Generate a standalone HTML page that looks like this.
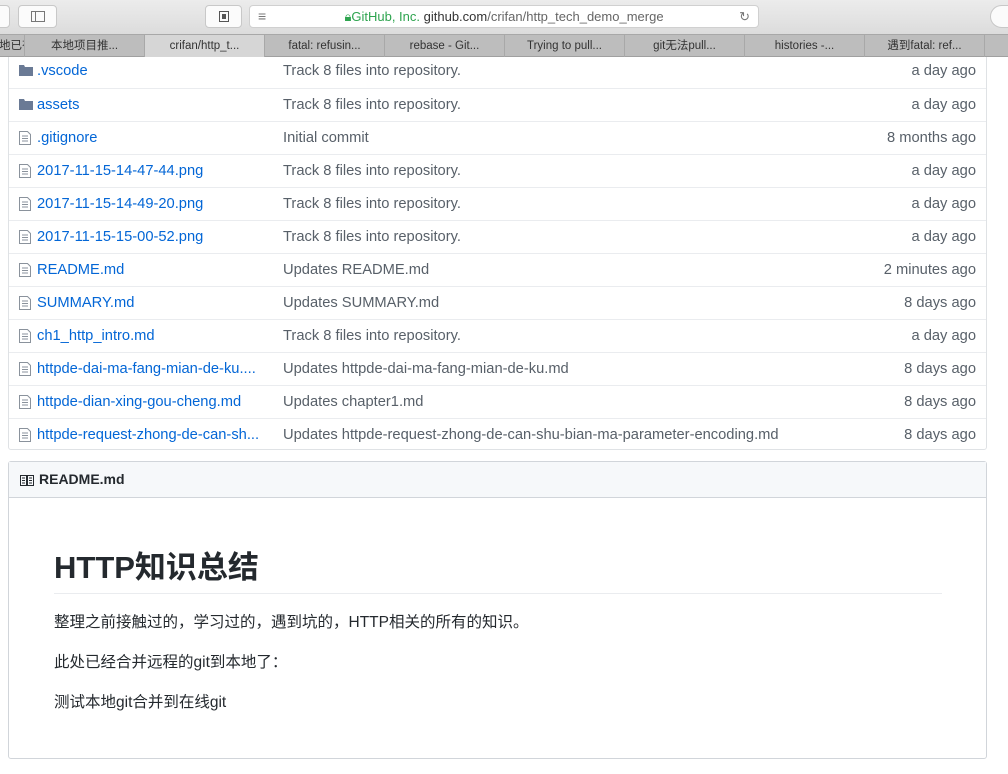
<!DOCTYPE html>
<html><head><meta charset="utf-8"><style>
*{box-sizing:border-box;margin:0;padding:0}
body{width:1008px;height:774px;overflow:hidden;background:#fff;font-family:"Liberation Sans","Noto Sans CJK SC",sans-serif;position:relative}
.toolbar{position:absolute;left:0;top:0;width:1008px;height:34px;background:linear-gradient(#ececec,#dcdcdc);z-index:3}
.btn{position:absolute;top:5px;height:23px;background:#fbfbfb;border:1px solid #c8c8c8;border-radius:4px}
.url{position:absolute;left:249px;top:5px;width:510px;height:23px;background:#fff;border:1px solid #d0d0d0;border-radius:4px;font-size:13px;line-height:21px;text-align:center;color:#333}
.tabs{position:absolute;left:0;top:34px;width:1008px;height:23px;background:#bdbdbd;border-top:1px solid #a8a8a8;border-bottom:1px solid #a0a0a0;z-index:3}
.tab{position:absolute;top:0;height:22px;font-size:11.5px;line-height:22px;text-align:center;color:#333;border-left:1px solid #a8a8a8;overflow:hidden;white-space:nowrap}
.tbl{position:absolute;left:8px;top:46px;width:979px;height:404px;border:1px solid #dfe2e5;border-radius:3px}
.row{position:absolute;left:0;width:977px;height:33px;border-top:1px solid #eaecef;font-size:14.7px}
.row .n{position:absolute;left:28px;top:8px;color:#0366d6}
.row .m{position:absolute;left:274px;top:8px;color:#586069}
.row .a{position:absolute;right:10px;top:8px;color:#586069}
.ic{position:absolute;left:10px;top:9px}
.rd{position:absolute;left:8px;top:461px;width:979px;height:298px;border:1px solid #d1d5da;border-radius:3px}
.rh{height:36px;background:#f6f8fa;border-bottom:1px solid #d1d5da;font-size:14px;font-weight:bold;line-height:35px;padding-left:30px;color:#24292e;position:relative}
h1{position:absolute;left:45px;top:80px;font-size:31px;font-weight:bold;color:#24292e}
.hr{position:absolute;left:45px;top:131px;width:888px;height:1px;background:#eaecef}
.p{position:absolute;left:45px;font-size:15.5px;color:#24292e}
</style></head><body>
<div class="toolbar">
<div class="btn" style="left:-5px;width:15px"></div>
<div class="btn" style="left:18px;width:39px"><div style="position:absolute;left:12px;top:5px;width:14px;height:11px;border:1px solid #777"></div><div style="position:absolute;left:16px;top:5px;width:1px;height:11px;background:#777"></div></div>
<div class="btn" style="left:205px;width:37px"><div style="position:absolute;left:13px;top:5px;width:10px;height:11px;border:1px solid #555"></div><div style="position:absolute;left:16px;top:8px;width:4px;height:5px;background:#555"></div></div>
<div class="url"><span style="position:absolute;left:8px;top:0;color:#777;font-size:14px">≡</span><span style="color:#2ea44f">🔒︎GitHub, Inc.</span> github.com<span style="color:#666">/crifan/http_tech_demo_merge</span><span style="position:absolute;right:8px;color:#777">↻</span></div>
<div class="btn" style="left:990px;width:30px;border-radius:12px"></div>
</div>
<div class="tabs">
<div class="tab" style="left:-2px;width:26px">地已有</div>
<div class="tab" style="left:24px;width:120px">本地项目推...</div>
<div class="tab" style="left:144px;width:120px;background:#d6d6d6">crifan/http_t...</div>
<div class="tab" style="left:264px;width:120px">fatal: refusin...</div>
<div class="tab" style="left:384px;width:120px">rebase - Git...</div>
<div class="tab" style="left:504px;width:120px">Trying to pull...</div>
<div class="tab" style="left:624px;width:120px">git无法pull...</div>
<div class="tab" style="left:744px;width:120px">histories -...</div>
<div class="tab" style="left:864px;width:120px">遇到fatal: ref...</div>
<div class="tab" style="left:984px;width:30px"></div>
</div>
<div class="tbl">
<div class="row" style="top:8px;border-top:none"><svg class="ic" width="14" height="12"><path d="M0 1h5l1 2h8v9H0z" fill="#6a7a95"/></svg><span class="n">.vscode</span><span class="m">Track 8 files into repository.</span><span class="a">a day ago</span></div>
<div class="row" style="top:41px"><svg class="ic" width="14" height="12"><path d="M0 1h5l1 2h8v9H0z" fill="#6a7a95"/></svg><span class="n">assets</span><span class="m">Track 8 files into repository.</span><span class="a">a day ago</span></div>
<div class="row" style="top:74px"><svg class="ic" width="12" height="14"><path d="M.5.5h8l3 3v10H.5z M3 5h6M3 7.5h6M3 10h6" fill="none" stroke="#8a929c"/></svg><span class="n">.gitignore</span><span class="m">Initial commit</span><span class="a">8 months ago</span></div>
<div class="row" style="top:107px"><svg class="ic" width="12" height="14"><path d="M.5.5h8l3 3v10H.5z M3 5h6M3 7.5h6M3 10h6" fill="none" stroke="#8a929c"/></svg><span class="n">2017-11-15-14-47-44.png</span><span class="m">Track 8 files into repository.</span><span class="a">a day ago</span></div>
<div class="row" style="top:140px"><svg class="ic" width="12" height="14"><path d="M.5.5h8l3 3v10H.5z M3 5h6M3 7.5h6M3 10h6" fill="none" stroke="#8a929c"/></svg><span class="n">2017-11-15-14-49-20.png</span><span class="m">Track 8 files into repository.</span><span class="a">a day ago</span></div>
<div class="row" style="top:173px"><svg class="ic" width="12" height="14"><path d="M.5.5h8l3 3v10H.5z M3 5h6M3 7.5h6M3 10h6" fill="none" stroke="#8a929c"/></svg><span class="n">2017-11-15-15-00-52.png</span><span class="m">Track 8 files into repository.</span><span class="a">a day ago</span></div>
<div class="row" style="top:206px"><svg class="ic" width="12" height="14"><path d="M.5.5h8l3 3v10H.5z M3 5h6M3 7.5h6M3 10h6" fill="none" stroke="#8a929c"/></svg><span class="n">README.md</span><span class="m">Updates README.md</span><span class="a">2 minutes ago</span></div>
<div class="row" style="top:239px"><svg class="ic" width="12" height="14"><path d="M.5.5h8l3 3v10H.5z M3 5h6M3 7.5h6M3 10h6" fill="none" stroke="#8a929c"/></svg><span class="n">SUMMARY.md</span><span class="m">Updates SUMMARY.md</span><span class="a">8 days ago</span></div>
<div class="row" style="top:272px"><svg class="ic" width="12" height="14"><path d="M.5.5h8l3 3v10H.5z M3 5h6M3 7.5h6M3 10h6" fill="none" stroke="#8a929c"/></svg><span class="n">ch1_http_intro.md</span><span class="m">Track 8 files into repository.</span><span class="a">a day ago</span></div>
<div class="row" style="top:305px"><svg class="ic" width="12" height="14"><path d="M.5.5h8l3 3v10H.5z M3 5h6M3 7.5h6M3 10h6" fill="none" stroke="#8a929c"/></svg><span class="n">httpde-dai-ma-fang-mian-de-ku....</span><span class="m">Updates httpde-dai-ma-fang-mian-de-ku.md</span><span class="a">8 days ago</span></div>
<div class="row" style="top:338px"><svg class="ic" width="12" height="14"><path d="M.5.5h8l3 3v10H.5z M3 5h6M3 7.5h6M3 10h6" fill="none" stroke="#8a929c"/></svg><span class="n">httpde-dian-xing-gou-cheng.md</span><span class="m">Updates chapter1.md</span><span class="a">8 days ago</span></div>
<div class="row" style="top:371px"><svg class="ic" width="12" height="14"><path d="M.5.5h8l3 3v10H.5z M3 5h6M3 7.5h6M3 10h6" fill="none" stroke="#8a929c"/></svg><span class="n">httpde-request-zhong-de-can-sh...</span><span class="m">Updates httpde-request-zhong-de-can-shu-bian-ma-parameter-encoding.md</span><span class="a">8 days ago</span></div>
</div>
<div class="rd">
<div class="rh"><svg style="position:absolute;left:11px;top:12px" width="15" height="12"><path d="M.5 1.5h6v10h-6z M7.5 1.5h6v10h-6z M2 4h3M2 6.5h3M2 9h3M9 4h3M9 6.5h3M9 9h3" fill="none" stroke="#24292e"/></svg>README.md</div>
<h1>HTTP知识总结</h1>
<div class="hr"></div>
<div class="p" style="top:148px">整理之前接触过的，学习过的，遇到坑的，HTTP相关的所有的知识。</div>
<div class="p" style="top:188px">此处已经合并远程的git到本地了：</div>
<div class="p" style="top:228px">测试本地git合并到在线git</div>
</div>
</body></html>
